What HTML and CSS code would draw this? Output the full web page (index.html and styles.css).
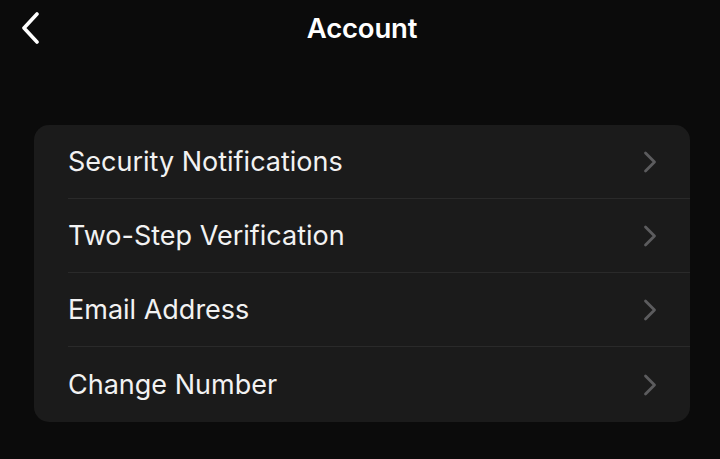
FILE: index.html
```html
<!DOCTYPE html>
<html>
    <head>
        <title>Account</title>
        <link rel="stylesheet" href="styles.css">
    </head>
    <body>
        <div class="topbar">
            <button class="back">
                <svg width="22" height="32" viewBox="0 0 22 32"><path d="M17 2 L4 16 L17 30" fill="none" stroke="#fff" stroke-width="3.6" stroke-linecap="round" stroke-linejoin="round"/></svg>
            </button>
            <div class="title">Account</div>
        </div>
        <ul class="list">
            <li class="row"><span>Security Notifications</span><svg class="chev" width="14" height="22" viewBox="0 0 14 22"><path d="M2.5 2 L11.5 11 L2.5 20" fill="none" stroke="#5c5c5e" stroke-width="2.8" stroke-linecap="round" stroke-linejoin="round"/></svg></li>
            <li class="row"><span>Two-Step Verification</span><svg class="chev" width="14" height="22" viewBox="0 0 14 22"><path d="M2.5 2 L11.5 11 L2.5 20" fill="none" stroke="#5c5c5e" stroke-width="2.8" stroke-linecap="round" stroke-linejoin="round"/></svg></li>
            <li class="row"><span>Email Address</span><svg class="chev" width="14" height="22" viewBox="0 0 14 22"><path d="M2.5 2 L11.5 11 L2.5 20" fill="none" stroke="#5c5c5e" stroke-width="2.8" stroke-linecap="round" stroke-linejoin="round"/></svg></li>
            <li class="row"><span>Change Number</span><svg class="chev" width="14" height="22" viewBox="0 0 14 22"><path d="M2.5 2 L11.5 11 L2.5 20" fill="none" stroke="#5c5c5e" stroke-width="2.8" stroke-linecap="round" stroke-linejoin="round"/></svg></li>
        </ul>
    </body>
</html>
```

FILE: styles.css
```css
html, body {
    margin: 0;
    padding: 0;
    width: 100%;
    height: 100%;
    background: #0b0b0b;
    font-family: Inter, 'Liberation Sans', sans-serif;
    color: #fff;
    overflow: hidden;
}
.topbar {
    display: flex;
    align-items: center;
    justify-content: center;
    position: relative;
    height: 56px;
}
.back {
    position: absolute;
    left: 20px;
    top: 12px;
    background: none;
    border: none;
    padding: 0;
    line-height: 0;
}
.title {
    font-size: 27.5px;
    font-weight: 600;
    letter-spacing: -0.2px;
    margin-left: 4px;
}
.list {
    list-style-type: none;
    margin: 69px 30px 0 34px;
    padding: 0 0 0 34px;
    background: #1b1b1b;
    border-radius: 15px;
}
.row {
    display: flex;
    align-items: center;
    justify-content: space-between;
    height: 73px;
    padding-right: 33px;
    border-bottom: 1px solid #2a2a2a;
    font-size: 27px;
    color: #f2f2f2;
}
.row:last-child {
    border-bottom: none;
    height: 75px;
}
```
